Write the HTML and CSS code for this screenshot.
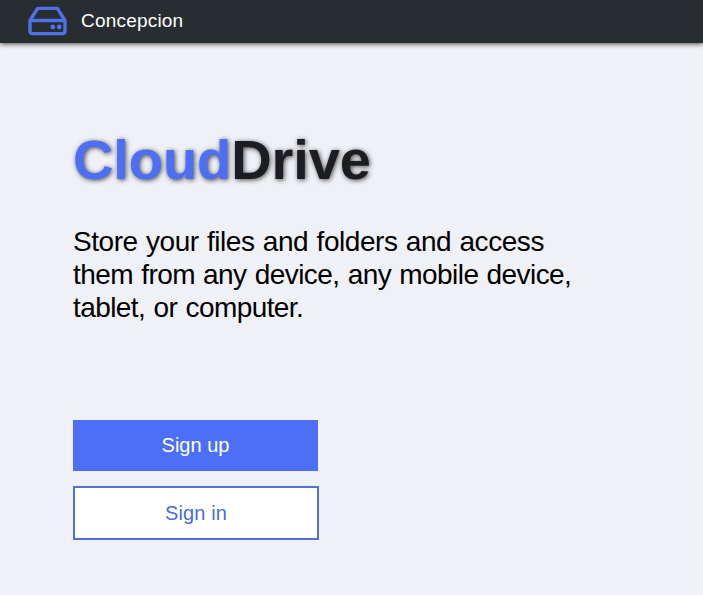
FILE: index.html
```html
<!DOCTYPE html>
<html lang="en">
<head>
<meta charset="utf-8">
<title>CloudDrive</title>
<link rel="stylesheet" href="styles.css">
</head>
<body>
<header class="topbar">
  <svg class="logo" width="40" height="30" viewBox="0 0 40 30" fill="none" stroke="#4f71e8" stroke-width="3.4" stroke-linejoin="round" stroke-linecap="round" aria-hidden="true">
    <path d="M2 14.5 9.6 2.4H29.4L37 14.5V25Q37 27.6 34.2 27.6H4.8Q2 27.6 2 25V14.5H37"/>
    <g fill="#4f71e8" stroke="none"><circle cx="24.8" cy="21" r="2.4"/><circle cx="31.2" cy="21" r="2.4"/></g>
  </svg>
  <span class="user">Concepcion</span>
</header>
<main class="hero">
  <h1 class="title"><span class="accent">Cloud</span>Drive</h1>
  <p class="lead">Store your files and folders and access<br><span class="tight">them from any device, any mobile device,<br>tablet, or computer.</span></p>
  <nav class="actions">
    <a class="button primary">Sign up</a>
    <a class="button outline">Sign in</a>
  </nav>
</main>
</body>
</html>
```

FILE: styles.css
```css
* { box-sizing: border-box; }

body {
  margin: 0;
  min-height: 100vh;
  background: #f0f1f6;
  color: #000;
  font-family: "Liberation Sans", Arial, sans-serif;
}

.topbar {
  display: flex;
  align-items: flex-start;
  gap: 13px;
  height: 43px;
  padding: 6px 28px 0;
  background: #282d31;
  box-shadow: 0 1px 5px rgba(0, 0, 0, 0.7);
}

.logo { display: block; }

.user {
  padding-top: 4px;
  color: #fff;
  font-size: 19px;
  line-height: 21px;
  letter-spacing: 0.2px;
}

.hero { padding: 85px 73px 0; }

.title {
  margin: 0;
  color: #1c1d22;
  font-size: 56px;
  line-height: 64px;
  letter-spacing: -0.08px;
  text-shadow: 1px 1px 5px rgba(0, 0, 0, 0.7);
}

.accent { color: #4c6ff5; }

.lead {
  margin: 33px 0 0;
  font-size: 28px;
  line-height: 33px;
  letter-spacing: -0.45px;
  word-spacing: 1px;
  white-space: nowrap;
}

.tight { letter-spacing: -0.57px; }

.actions {
  display: flex;
  flex-direction: column;
  gap: 15px;
  margin-top: 96px;
}

.button {
  display: flex;
  align-items: center;
  justify-content: center;
  width: 245px;
  height: 51px;
  font-size: 20px;
}

.primary {
  background: #4c6ff5;
  color: #fff;
}

.outline {
  width: 246px;
  height: 54px;
  border: 2px solid #5071d8;
  background: #fff;
  color: #4a6dd8;
  letter-spacing: 0.15px;
}
```
